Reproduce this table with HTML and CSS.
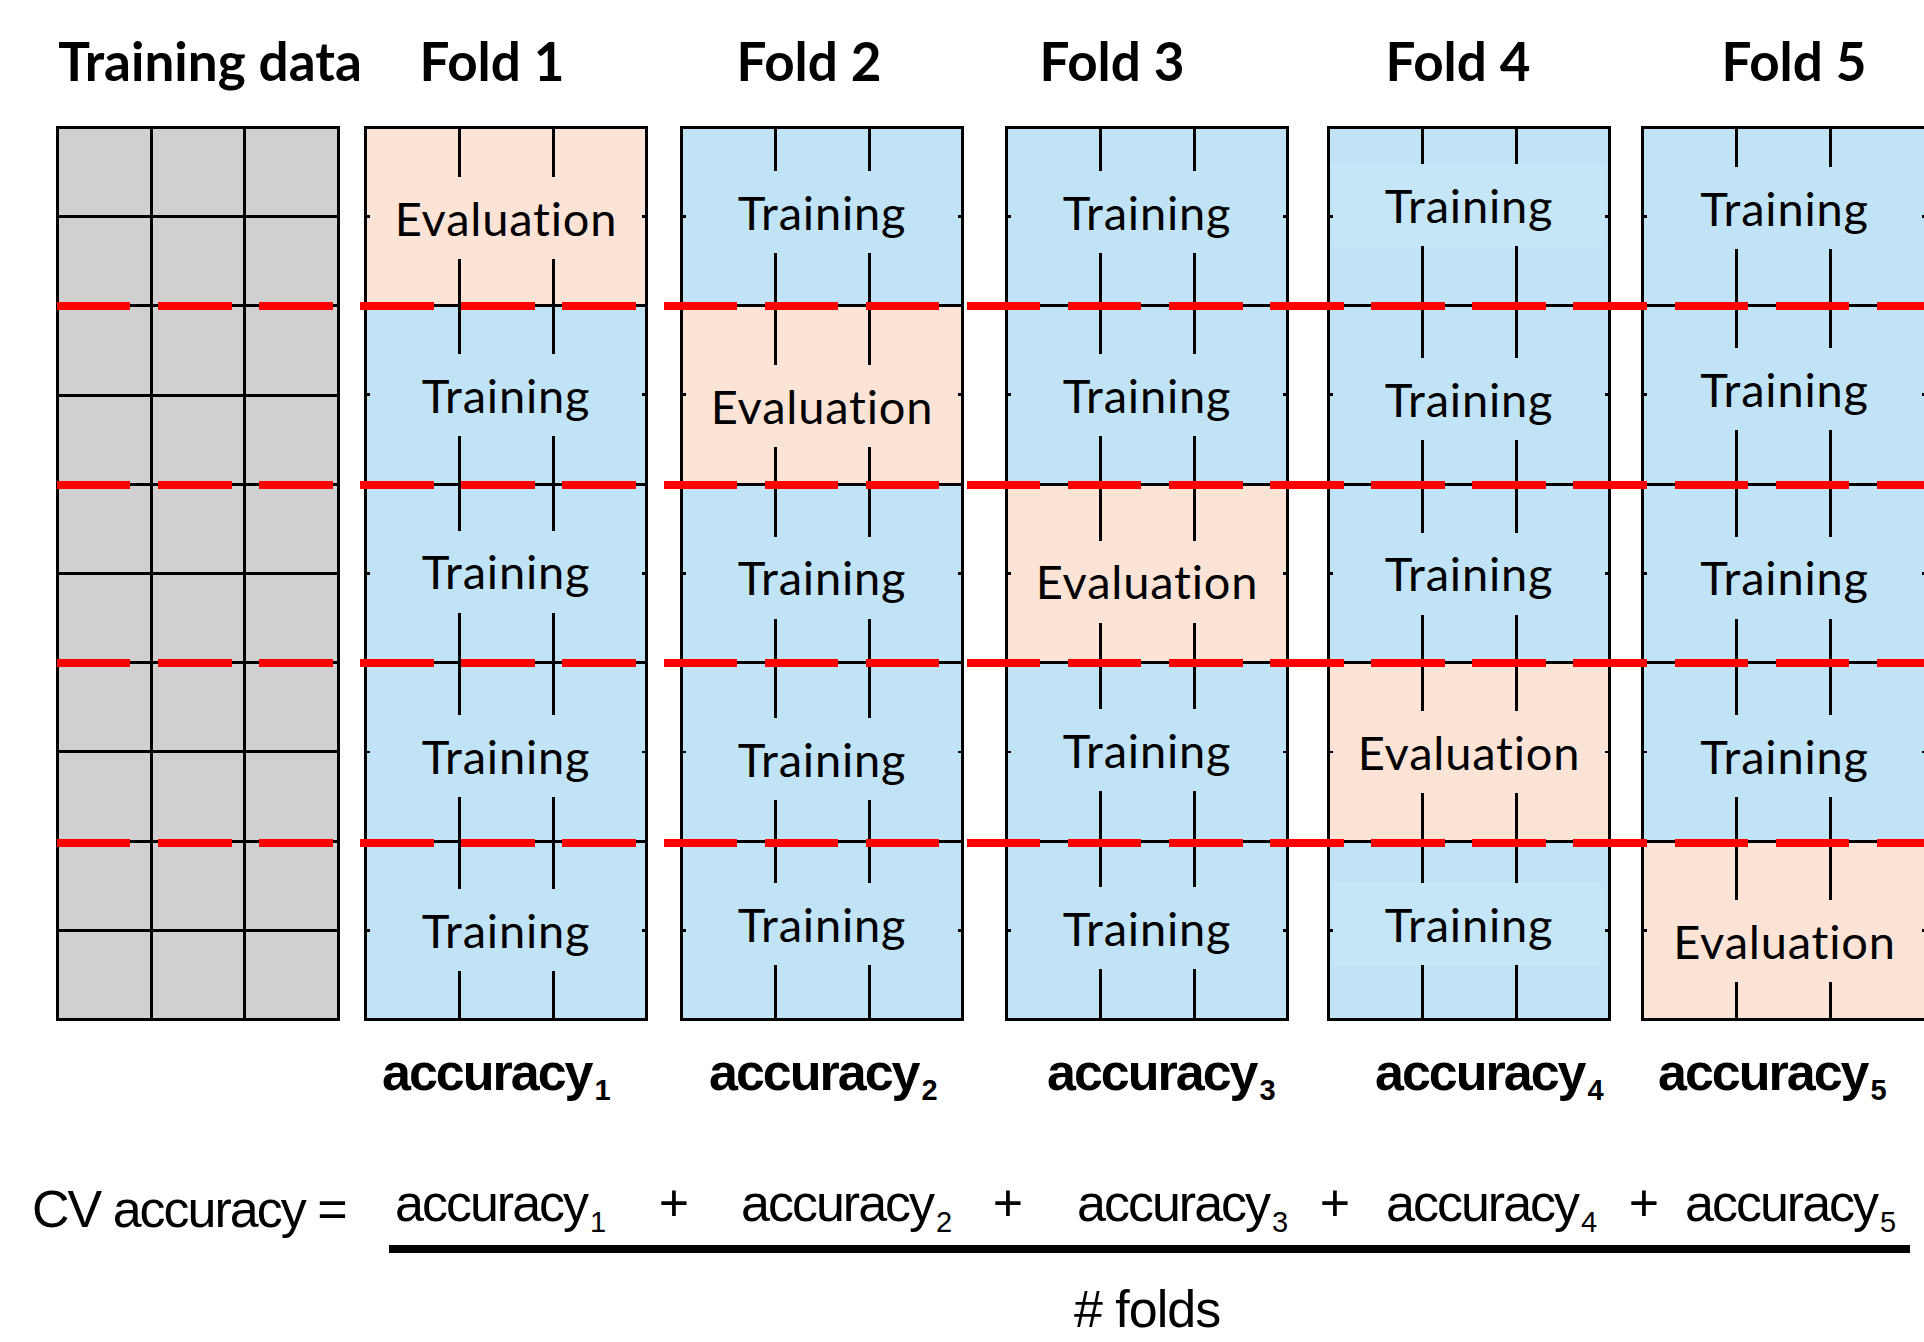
FILE: index.html
```html
<!DOCTYPE html>
<html lang="en">
<head>
<meta charset="utf-8">
<title>K-fold cross validation</title>
<link rel="stylesheet" href="styles.css">
</head>
<body>
<div class="page">
  <div class="heads">
    <div class="head h0">Training data</div>
    <div class="head h1">Fold 1</div>
    <div class="head h2">Fold 2</div>
    <div class="head h3">Fold 3</div>
    <div class="head h4">Fold 4</div>
    <div class="head h5">Fold 5</div>
  </div>

  <div class="diagram">
    <div class="data">
      <div></div><div></div><div></div>
      <div></div><div></div><div></div>
      <div></div><div></div><div></div>
      <div></div><div></div><div></div>
      <div></div><div></div><div></div>
      <div></div><div></div><div></div>
      <div></div><div></div><div></div>
      <div></div><div></div><div></div>
      <div></div><div></div><div></div>
      <div></div><div></div><div></div>
    </div>

    <div class="fold f1">
      <div class="block eval"><div class="label dn1">Evaluation</div></div>
      <div class="block train"><div class="label">Training</div></div>
      <div class="block train"><div class="label up2">Training</div></div>
      <div class="block train"><div class="label dn4">Training</div></div>
      <div class="block train"><div class="label">Training</div></div>
    </div>

    <div class="fold f2">
      <div class="block train"><div class="label up5">Training</div></div>
      <div class="block eval"><div class="label dn11">Evaluation</div></div>
      <div class="block train"><div class="label dn4">Training</div></div>
      <div class="block train"><div class="label dn7">Training</div></div>
      <div class="block train"><div class="label up6">Training</div></div>
    </div>

    <div class="fold f3">
      <div class="block train"><div class="label up5">Training</div></div>
      <div class="block train"><div class="label">Training</div></div>
      <div class="block eval"><div class="label dn8">Evaluation</div></div>
      <div class="block train"><div class="label up2">Training</div></div>
      <div class="block train"><div class="label up2">Training</div></div>
    </div>

    <div class="fold f4">
      <div class="block train"><div class="label up12 pale">Training</div></div>
      <div class="block train"><div class="label dn4">Training</div></div>
      <div class="block train"><div class="label">Training</div></div>
      <div class="block eval"><div class="label">Evaluation</div></div>
      <div class="block train"><div class="label up6 pale">Training</div></div>
    </div>

    <div class="fold f5">
      <div class="block train"><div class="label up9">Training</div></div>
      <div class="block train"><div class="label up6">Training</div></div>
      <div class="block train"><div class="label dn4">Training</div></div>
      <div class="block train"><div class="label dn4">Training</div></div>
      <div class="block eval"><div class="label dn11">Evaluation</div></div>
    </div>

    <div class="dash d1"></div>
    <div class="dash d2"></div>
    <div class="dash d3"></div>
    <div class="dash d4"></div>
  </div>

  <div class="accs">
    <div class="acc a1">accuracy<sub>1</sub></div>
    <div class="acc a2">accuracy<sub>2</sub></div>
    <div class="acc a3">accuracy<sub>3</sub></div>
    <div class="acc a4">accuracy<sub>4</sub></div>
    <div class="acc a5">accuracy<sub>5</sub></div>
  </div>

  <div class="formula">
    <div class="cv">CV accuracy =</div>
    <div class="frac">
      <div class="num">
        <div class="t t1">accuracy<sub>1</sub></div>
        <div class="p p1">+</div>
        <div class="t t2">accuracy<sub>2</sub></div>
        <div class="p p2">+</div>
        <div class="t t3">accuracy<sub>3</sub></div>
        <div class="p p3">+</div>
        <div class="t t4">accuracy<sub>4</sub></div>
        <div class="p p4">+</div>
        <div class="t t5">accuracy<sub>5</sub></div>
      </div>
      <div class="bar"></div>
      <div class="den"># folds</div>
    </div>
  </div>
</div>
</body>
</html>
```

FILE: styles.css
```css
html, body {
  margin: 0;
  padding: 0;
  background: #ffffff;
  overflow: hidden;
}

.page {
  width: 1924px;
  height: 1342px;
  overflow: hidden;
  font-family: "Liberation Sans", Arial, sans-serif;
  color: #000000;
}

/* ---------- headers ---------- */
.heads {
  display: flex;
  align-items: flex-start;
  height: 126px;
  box-sizing: border-box;
  padding-top: 34px;
}

.head {
  flex: none;
  width: 280px;
  display: flex;
  justify-content: center;
  white-space: nowrap;
  font-family: Lato, "Open Sans", sans-serif;
  font-weight: 700;
  font-size: 53px;
  line-height: 53px;
}

.h0 { margin-left: 70px; }
.h1 { margin-left: 2px; }
.h2 { margin-left: 37px; }
.h3 { margin-left: 23px; }
.h4 { margin-left: 66px; }
.h5 { margin-left: 56px; }

/* ---------- diagram ---------- */
.diagram {
  position: relative;
  display: flex;
  align-items: stretch;
  height: 895px;
}

.data {
  flex: none;
  margin-left: 56px;
  width: 284px;
  box-sizing: border-box;
  border: 3px solid #000000;
  background: #000000;
  display: grid;
  grid-template-columns: repeat(3, 1fr);
  grid-template-rows: repeat(10, 1fr);
  gap: 3px;
}

.data div {
  background: #d0d0d0;
}

.fold {
  flex: none;
  width: 284px;
  box-sizing: border-box;
  border: 3px solid #000000;
  display: flex;
  flex-direction: column;
}

.f1 { margin-left: 24px; }
.f2 { margin-left: 32px; }
.f3 { margin-left: 41px; }
.f4 { margin-left: 38px; }
.f5 { margin-left: 30px; width: 290px; border-right: 0; }

.block {
  flex: 1 1 0;
  display: flex;
  flex-direction: column;
  justify-content: center;
  background-image:
    linear-gradient(to right, transparent 91px, #000 91px, #000 94px, transparent 94px),
    linear-gradient(to right, transparent 185.5px, #000 185.5px, #000 188.5px, transparent 188.5px),
    linear-gradient(to bottom, transparent calc(50% - 1.5px), #000 calc(50% - 1.5px), #000 calc(50% + 1.5px), transparent calc(50% + 1.5px));
}

.block + .block {
  border-top: 3px solid #000000;
}

.train { background-color: #c0e4f5; }
.eval  { background-color: #fbe3d6; }

.label {
  height: 82px;
  margin: 0 3px;
  flex: none;
  display: flex;
  align-items: center;
  justify-content: center;
  white-space: nowrap;
  background-color: inherit;
  font-family: Lato, "Open Sans", sans-serif;
  font-size: 47px;
  letter-spacing: 0.8px;
  line-height: 1.2;
}

.f5 .label { margin-right: 9px; }

.pale { background-color: #c4e6f6; }

.dn1  { margin-top: 2px; }
.dn4  { margin-top: 8px; }
.dn7  { margin-top: 14px; }
.dn8  { margin-top: 16px; }
.dn11 { margin-top: 22px; }
.up2  { margin-bottom: 4px; }
.up5  { margin-bottom: 10px; }
.up6  { margin-bottom: 12px; }
.up9  { margin-bottom: 18px; }
.up12 { margin-bottom: 24px; }

.dash {
  position: absolute;
  left: 57px;
  right: 0;
  height: 8px;
  background: repeating-linear-gradient(to right, #ff0000 0, #ff0000 73.5px, transparent 73.5px, transparent 101.1px);
}

.d1 { top: 175.5px; }
.d2 { top: 354.5px; }
.d3 { top: 533px; }
.d4 { top: 712.5px; }

/* ---------- accuracy labels ---------- */
.accs {
  display: flex;
  margin-top: 21px;
  height: 60px;
}

.acc {
  flex: none;
  width: 240px;
  white-space: nowrap;
  font-weight: 700;
  font-size: 52px;
  line-height: 60px;
  letter-spacing: -2px;
}

.acc sub {
  font-size: 29px;
  line-height: 0;
  vertical-align: -10px;
  letter-spacing: 0;
  margin-left: 3px;
}

.a1 { margin-left: 382px; }
.a2 { margin-left: 87px; }
.a3 { margin-left: 98px; }
.a4 { margin-left: 88px; }
.a5 { margin-left: 43px; }

/* ---------- formula ---------- */
.formula {
  display: flex;
  align-items: flex-start;
  margin-top: 71px;
}

.cv {
  flex: none;
  width: 357px;
  margin-left: 32px;
  margin-top: 6px;
  white-space: nowrap;
  font-size: 52px;
  line-height: 60px;
  letter-spacing: -2px;
}

.frac {
  flex: none;
  width: 1521px;
}

.num {
  display: flex;
  height: 60px;
  white-space: nowrap;
  font-size: 52px;
  line-height: 60px;
  letter-spacing: -2px;
}

.num sub {
  font-size: 29px;
  line-height: 0;
  vertical-align: -11px;
  letter-spacing: 0;
  margin-left: 3px;
}

.t { flex: none; width: 222px; }
.p { flex: none; width: 50px; text-align: center; letter-spacing: 0; }

.t1 { margin-left: 6px; }
.p1 { margin-left: 32px; }
.t2 { margin-left: 42px; }
.p2 { margin-left: 20px; }
.t3 { margin-left: 44px; }
.p3 { margin-left: 11px; }
.t4 { margin-left: 26px; }
.p4 { margin-left: 11px; }
.t5 { margin-left: 16px; }

.bar {
  height: 8px;
  margin-top: 12px;
  background: #000000;
}

.den {
  margin-top: 26px;
  padding-left: 685px;
  white-space: nowrap;
  font-size: 52px;
  line-height: 60px;
  letter-spacing: -1px;
}
```
